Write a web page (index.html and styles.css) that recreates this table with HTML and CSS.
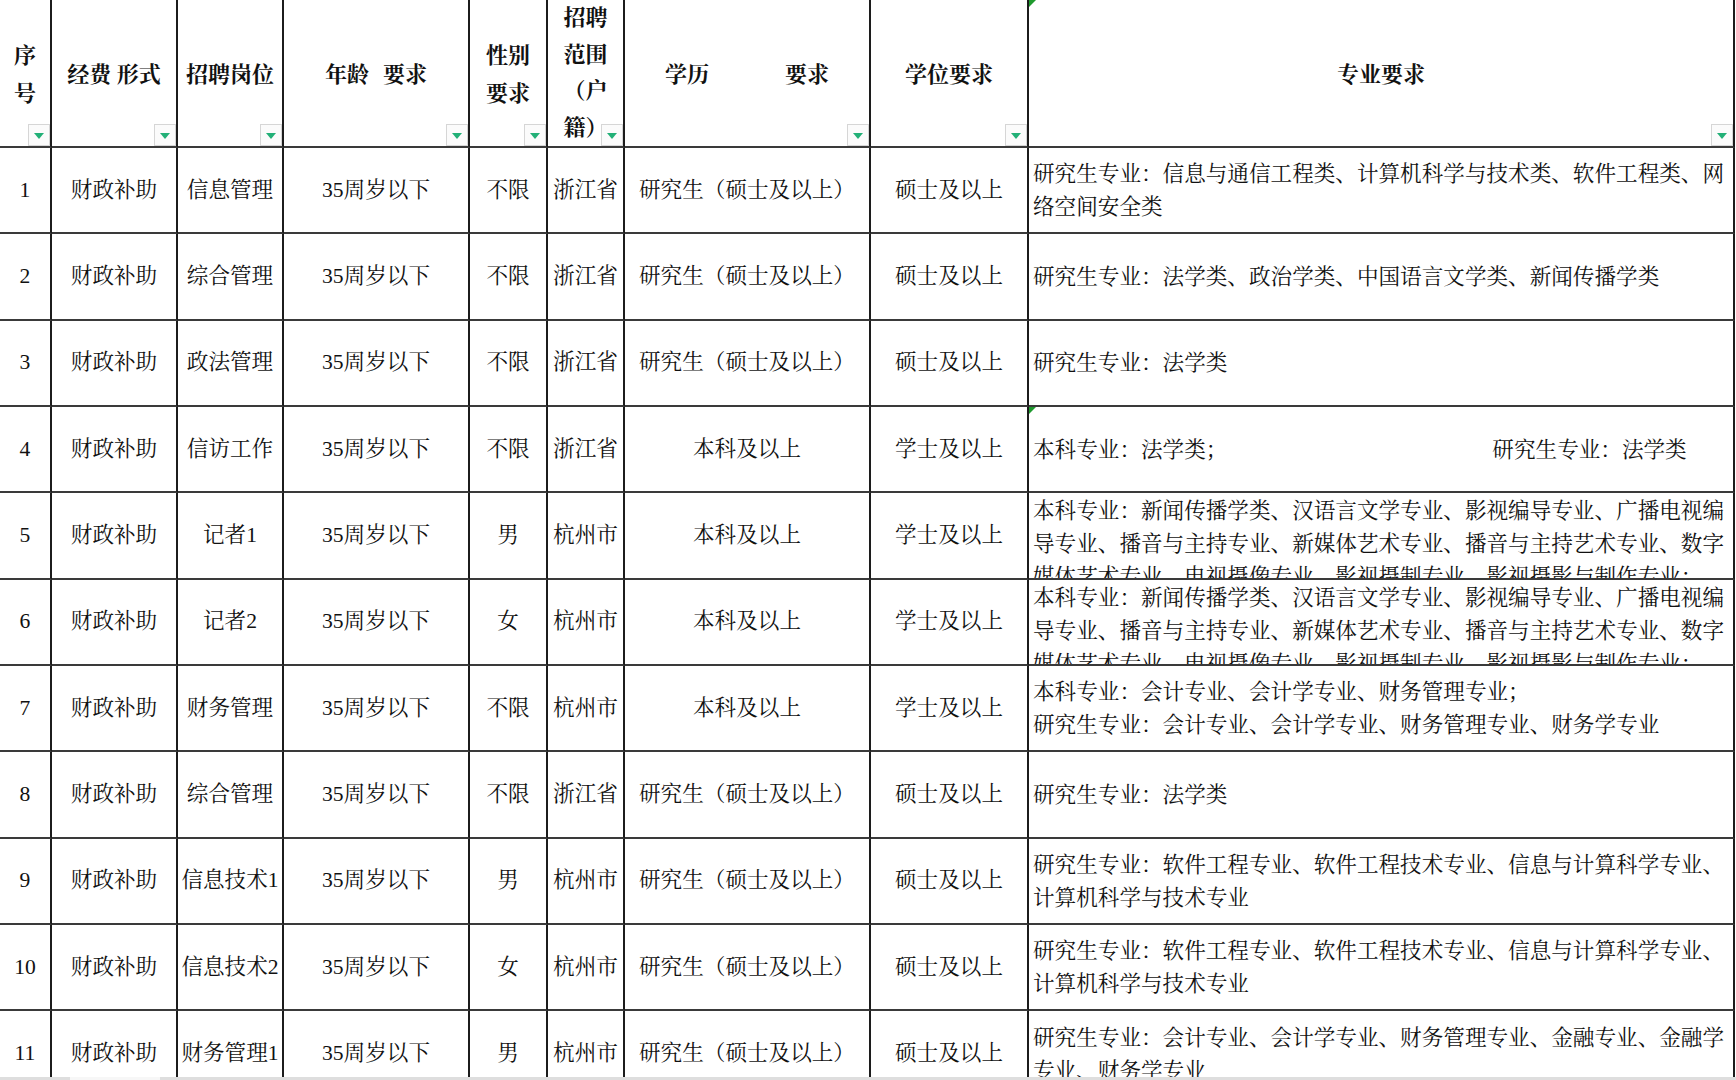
FILE: index.html
```html
<!DOCTYPE html>
<html lang="zh-CN">
<head>
<meta charset="utf-8">
<title>招聘岗位表</title>
<link rel="stylesheet" href="styles.css">
</head>
<body>
<div class="sheet">
  <div class="c h">序<br>号<span class="dd"></span></div>
  <div class="c h">经费 形式<span class="dd"></span></div>
  <div class="c h">招聘岗位<span class="dd"></span></div>
  <div class="c h"><span class="pair"><span>年龄</span><span>要求</span></span><span class="dd"></span></div>
  <div class="c h">性别<br>要求<span class="dd"></span></div>
  <div class="c h h4">招聘<br>范围<br>（户<br>籍）<span class="dd"></span></div>
  <div class="c h"><span class="pair wide"><span>学历</span><span>要求</span></span><span class="dd"></span></div>
  <div class="c h">学位要求<span class="dd"></span></div>
  <div class="c h flag">专业要求<span class="dd"></span></div>

  <div class="c">1</div><div class="c">财政补助</div><div class="c">信息管理</div><div class="c">35周岁以下</div><div class="c">不限</div><div class="c">浙江省</div><div class="c">研究生（硕士及以上）</div><div class="c">硕士及以上</div>
  <div class="c l"><div class="t">研究生专业：信息与通信工程类、计算机科学与技术类、软件工程类、网络空间安全类</div></div>

  <div class="c">2</div><div class="c">财政补助</div><div class="c">综合管理</div><div class="c">35周岁以下</div><div class="c">不限</div><div class="c">浙江省</div><div class="c">研究生（硕士及以上）</div><div class="c">硕士及以上</div>
  <div class="c l"><div class="t">研究生专业：法学类、政治学类、中国语言文学类、新闻传播学类</div></div>

  <div class="c">3</div><div class="c">财政补助</div><div class="c">政法管理</div><div class="c">35周岁以下</div><div class="c">不限</div><div class="c">浙江省</div><div class="c">研究生（硕士及以上）</div><div class="c">硕士及以上</div>
  <div class="c l"><div class="t">研究生专业：法学类</div></div>

  <div class="c">4</div><div class="c">财政补助</div><div class="c">信访工作</div><div class="c">35周岁以下</div><div class="c">不限</div><div class="c">浙江省</div><div class="c">本科及以上</div><div class="c">学士及以上</div>
  <div class="c l flag"><div class="t">本科专业：法学类；<span class="gap"></span>研究生专业：法学类</div></div>

  <div class="c">5</div><div class="c">财政补助</div><div class="c">记者1</div><div class="c">35周岁以下</div><div class="c">男</div><div class="c">杭州市</div><div class="c">本科及以上</div><div class="c">学士及以上</div>
  <div class="c l"><div class="t">本科专业：新闻传播学类、汉语言文学专业、影视编导专业、广播电视编导专业、播音与主持专业、新媒体艺术专业、播音与主持艺术专业、数字媒体艺术专业、电视摄像专业、影视摄制专业、影视摄影与制作专业；</div></div>

  <div class="c">6</div><div class="c">财政补助</div><div class="c">记者2</div><div class="c">35周岁以下</div><div class="c">女</div><div class="c">杭州市</div><div class="c">本科及以上</div><div class="c">学士及以上</div>
  <div class="c l"><div class="t">本科专业：新闻传播学类、汉语言文学专业、影视编导专业、广播电视编导专业、播音与主持专业、新媒体艺术专业、播音与主持艺术专业、数字媒体艺术专业、电视摄像专业、影视摄制专业、影视摄影与制作专业；</div></div>

  <div class="c">7</div><div class="c">财政补助</div><div class="c">财务管理</div><div class="c">35周岁以下</div><div class="c">不限</div><div class="c">杭州市</div><div class="c">本科及以上</div><div class="c">学士及以上</div>
  <div class="c l"><div class="t">本科专业：会计专业、会计学专业、财务管理专业；<br>研究生专业：会计专业、会计学专业、财务管理专业、财务学专业</div></div>

  <div class="c">8</div><div class="c">财政补助</div><div class="c">综合管理</div><div class="c">35周岁以下</div><div class="c">不限</div><div class="c">浙江省</div><div class="c">研究生（硕士及以上）</div><div class="c">硕士及以上</div>
  <div class="c l"><div class="t">研究生专业：法学类</div></div>

  <div class="c">9</div><div class="c">财政补助</div><div class="c">信息技术1</div><div class="c">35周岁以下</div><div class="c">男</div><div class="c">杭州市</div><div class="c">研究生（硕士及以上）</div><div class="c">硕士及以上</div>
  <div class="c l"><div class="t">研究生专业：软件工程专业、软件工程技术专业、信息与计算科学专业、<br>计算机科学与技术专业</div></div>

  <div class="c">10</div><div class="c">财政补助</div><div class="c">信息技术2</div><div class="c">35周岁以下</div><div class="c">女</div><div class="c">杭州市</div><div class="c">研究生（硕士及以上）</div><div class="c">硕士及以上</div>
  <div class="c l"><div class="t">研究生专业：软件工程专业、软件工程技术专业、信息与计算科学专业、<br>计算机科学与技术专业</div></div>

  <div class="c">11</div><div class="c">财政补助</div><div class="c">财务管理1</div><div class="c">35周岁以下</div><div class="c">男</div><div class="c">杭州市</div><div class="c">研究生（硕士及以上）</div><div class="c">硕士及以上</div>
  <div class="c l"><div class="t">研究生专业：会计专业、会计学专业、财务管理专业、金融专业、金融学专业、财务学专业</div></div>
</div>
<div class="hbar"><span class="thumb"></span></div>
</body>
</html>
```

FILE: styles.css
```css
html, body {
  margin: 0;
  padding: 0;
  background: #ffffff;
}
body {
  width: 1736px;
  height: 1080px;
  overflow: hidden;
  font-family: "Liberation Serif", "Noto Serif CJK SC", "Noto Serif SC", "AR PL UMing CN", "Noto Sans CJK SC", serif;
  font-size: 21.6px;
  color: #111111;
}
.sheet {
  display: grid;
  grid-template-columns: 52px 126px 106px 186px 78px 77px 246px 158px 706px;
  grid-template-rows: 148px repeat(11, 86.35px);
}
.c {
  box-sizing: border-box;
  border-right: 2px solid #1c1c1c;
  border-bottom: 2px solid #3a3a3a;
  display: flex;
  align-items: safe center;
  justify-content: center;
  text-align: center;
  line-height: 33px;
  overflow: hidden;
  white-space: nowrap;
}
.h {
  position: relative;
  font-weight: 700;
  font-size: 22px;
  line-height: 38px;
  white-space: normal;
  overflow: visible;
  padding-top: 4px;
}
.h.h4 {
  line-height: 36.5px;
  padding-top: 0;
}
.pair {
  display: flex;
  gap: 14px;
}
.pair.wide {
  gap: 76px;
}
.dd {
  position: absolute;
  right: 0;
  bottom: 0;
  width: 22px;
  height: 22px;
  box-sizing: border-box;
  border: 1px solid #d6d6d6;
  background: #fbfbfb;
}
.dd::after {
  content: "";
  position: absolute;
  left: 5px;
  top: 8px;
  border-left: 5px solid transparent;
  border-right: 5px solid transparent;
  border-top: 6px solid #22b077;
}
.l {
  justify-content: flex-start;
  text-align: left;
  white-space: normal;
  padding: 2px 2px 0 4px;
}
.t {
  width: 100%;
}
.gap {
  display: inline-block;
  width: 265px;
}
.flag {
  position: relative;
}
.flag::before {
  content: "";
  position: absolute;
  left: 0;
  top: 0;
  border-top: 7px solid #1f9a2e;
  border-right: 7px solid transparent;
}
.hbar {
  position: fixed;
  left: 0;
  right: 0;
  bottom: 0;
  height: 3px;
  background: #dedede;
}
.thumb {
  position: absolute;
  left: 70px;
  top: 0;
  width: 90px;
  height: 3px;
  background: #f7f7f7;
}
```
